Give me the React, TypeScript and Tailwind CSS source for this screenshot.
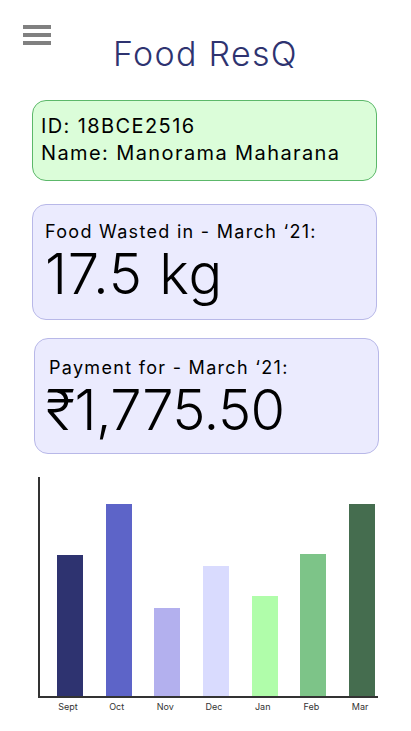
import React from 'react';

const bars = [
    { label: 'Sept', h: 141, color: 'bg-[#2e3370]' },
    { label: 'Oct', h: 192, color: 'bg-[#5d64c8]' },
    { label: 'Nov', h: 88, color: 'bg-[#b3b0ee]' },
    { label: 'Dec', h: 130, color: 'bg-[#d9dbfe]' },
    { label: 'Jan', h: 100, color: 'bg-[#b0fdaa]' },
    { label: 'Feb', h: 142, color: 'bg-[#7dc488]' },
    { label: 'Mar', h: 192, color: 'bg-[#456d4f]' },
];

export default function App() {
    return (
        <div className="w-[411px] h-[731px] bg-white overflow-hidden text-black" style={{ fontFamily: 'Inter, "DejaVu Sans", sans-serif' }}>
            {/* header */}
            <div className="grid grid-cols-[1fr_auto_1fr] pt-[25px]">
                <div className="pl-[23px] flex flex-col gap-[4px]">
                    <div className="w-[28px] h-[4px] bg-[#808080]" />
                    <div className="w-[28px] h-[4px] bg-[#808080]" />
                    <div className="w-[28px] h-[4px] bg-[#808080]" />
                </div>
                <h1 className="mt-[7px] text-[34px] leading-[44px] text-[#2e3370] tracking-[1.3px] font-light">Food ResQ</h1>
                <div />
            </div>

            {/* id card */}
            <div className="mt-[24px] ml-[32px] w-[345px] h-[81px] rounded-[14px] border border-[#5cb86a] bg-[#dbfdd9] pl-[8px] pt-[12px] text-[20px] leading-[27px] tracking-[1.4px]">
                <p>ID: 18BCE2516</p>
                <p>Name: Manorama Maharana</p>
            </div>

            {/* food wasted */}
            <div className="mt-[23px] ml-[32px] w-[345px] h-[116px] rounded-[14px] border border-[#b8b8e8] bg-[#ebebfe] pl-[12px] pt-[14px]">
                <p className="text-[18px] leading-[26px] tracking-[1.3px]">Food Wasted in - March ‘21:</p>
                <p className="text-[56px] leading-[58px] font-light tracking-[0.8px]">17.5 kg</p>
            </div>

            {/* payment */}
            <div className="mt-[18px] ml-[34px] w-[345px] h-[116px] rounded-[14px] border border-[#b8b8e8] bg-[#ebebfe] pl-[14px] pt-[16px]">
                <p className="text-[18px] leading-[26px] tracking-[1.3px]">Payment for - March ‘21:</p>
                <p className="-ml-[3px] text-[56px] leading-[58px] font-light tracking-[-0.6px]">₹1,775.50</p>
            </div>

            {/* chart */}
            <div className="mt-[23px] ml-[38px] w-[340px]">
                <div className="h-[221px] border-l-2 border-b-2 border-[#333] flex items-end pl-[17px] gap-[22.7px]">
                    {bars.map((b) => (
                        <div key={b.label} className={`w-[26px] ${b.color}`} style={{ height: b.h }} />
                    ))}
                </div>
                <div className="flex pl-[17px] gap-[22.7px]">
                    {bars.map((b) => (
                        <div key={b.label} className="w-[26px] flex justify-center">
                            <span className="text-[9px] leading-[18px] text-[#333] whitespace-nowrap">{b.label}</span>
                        </div>
                    ))}
                </div>
            </div>
        </div>
    );
}
